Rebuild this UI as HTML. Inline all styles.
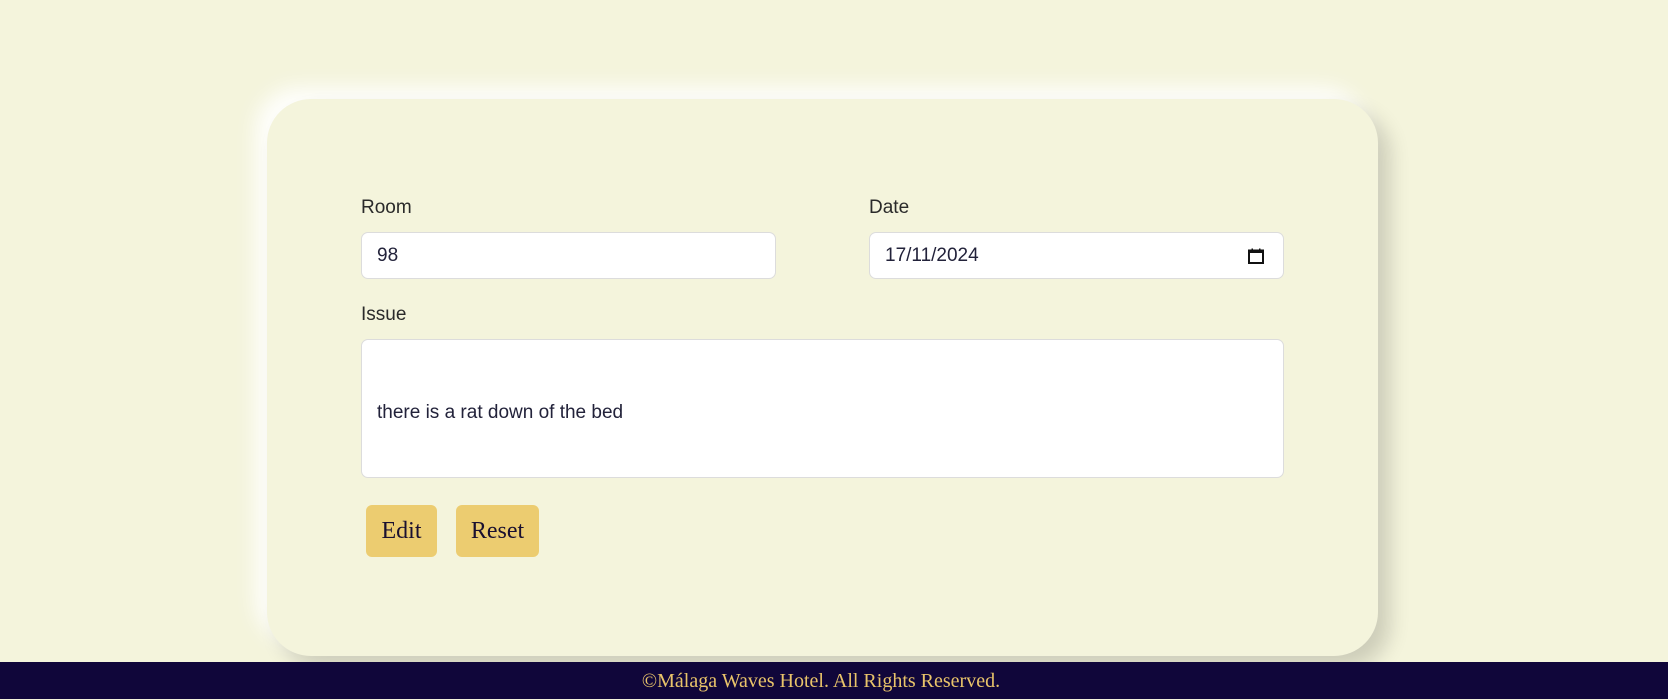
<!DOCTYPE html>
<html><head><meta charset="utf-8"><style>
*{box-sizing:border-box;margin:0;padding:0}
html,body{width:1668px;height:699px;overflow:hidden;background:#f4f4dc;font-family:"Segoe UI","Liberation Sans",sans-serif}
.card{position:absolute;left:267px;top:99px;width:1111px;height:557px;border-radius:44px;background:#f4f4dc;box-shadow:12px 12px 20px rgba(0,0,0,.16),-12px -12px 20px rgba(255,255,255,.9)}
.lbl{position:absolute;font-size:19px;color:#2a2a2a;}
.inp{position:absolute;background:#fff;border:1px solid #dcdcdc;border-radius:7px;font-size:19px;color:#22223a;padding-left:15px;display:flex;align-items:center}
.btn{position:absolute;background:#eccc70;border-radius:6px;font-family:"Liberation Serif",serif;font-size:24px;color:#1a1030;display:flex;align-items:center;justify-content:center}
.foot{position:absolute;left:0;top:662px;width:1668px;height:37px;background:#10063a;color:#e9c46a;font-family:"Liberation Serif",serif;font-size:20px;text-align:center;line-height:38px;padding-right:26px}
</style></head><body>
<div class="card"></div>
<div class="lbl" style="left:361px;top:197px">Room</div>
<div class="lbl" style="left:869px;top:197px">Date</div>
<div class="inp" style="left:361px;top:232px;width:415px;height:47px">98</div>
<div class="inp" style="left:869px;top:232px;width:415px;height:47px">17/11/2024
<svg style="position:absolute;right:18px;top:14px" width="18" height="18" viewBox="0 0 18 18"><rect x="2" y="3.5" width="14" height="12.5" fill="none" stroke="#111" stroke-width="2"/><rect x="2" y="3" width="14" height="3" fill="#111"/><rect x="4.5" y="1.5" width="1.5" height="2.5" fill="#111"/><rect x="12" y="1.5" width="1.5" height="2.5" fill="#111"/></svg></div>
<div class="lbl" style="left:361px;top:304px">Issue</div>
<div class="inp" style="left:361px;top:339px;width:923px;height:139px;padding-top:8px">there is a rat down of the bed</div>
<div class="btn" style="left:366px;top:505px;width:71px;height:52px">Edit</div>
<div class="btn" style="left:456px;top:505px;width:83px;height:52px">Reset</div>
<div class="foot">©Málaga Waves Hotel. All Rights Reserved.</div>
</body></html>
